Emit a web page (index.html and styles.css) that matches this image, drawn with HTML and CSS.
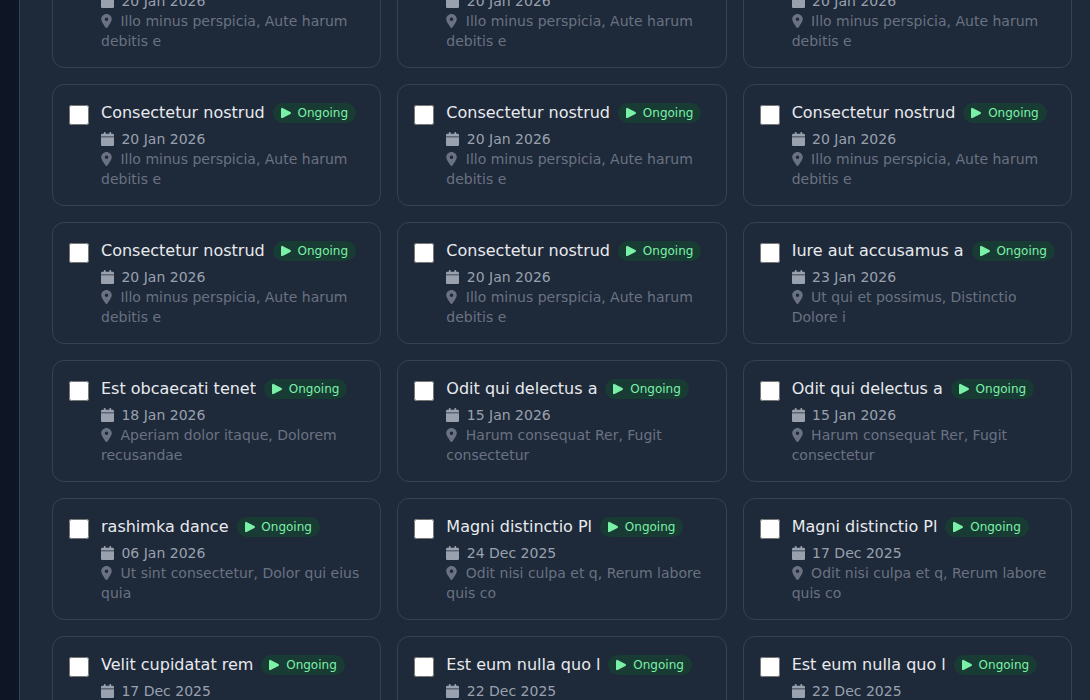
FILE: index.html
```html
<!DOCTYPE html>
<html lang="en">
<head>
<meta charset="utf-8">
<meta name="viewport" content="width=device-width, initial-scale=1">
<title>Events</title>
<link rel="stylesheet" href="styles.css">
</head>
<body>
<svg class="sprite" aria-hidden="true">
  <symbol id="play" viewBox="0 0 384 512" preserveAspectRatio="none"><path d="M60 39c-14.800-9.100-24-9.400-36-.9S0 62.600 0 80V432c0 17.400 4 33.400 18 41.900s28 8.100 42-.9L361 297c14.300-8.700 23-24.200 23-41s-8.700-32.200-23-41L60 39z"/></symbol>
  <symbol id="calendar" viewBox="0 0 448 512" preserveAspectRatio="none"><path d="M96 32V64H48C21.500 64 0 85.500 0 112v48H448V112c0-26.500-21.500-48-48-48H352V32c0-17.700-14.300-32-32-32s-32 14.300-32 32V64H160V32c0-17.700-14.300-32-32-32S96 14.300 96 32zM448 192H0V464c0 26.500 21.500 48 48 48H400c26.500 0 48-21.500 48-48V192z"/></symbol>
  <symbol id="pin" viewBox="0 0 384 512"><path d="M215.700 499.200C267 435 384 279.400 384 192C384 86 298 0 192 0S0 86 0 192c0 87.400 117 243 168.300 307.200c12.300 15.300 35.100 15.300 47.400 0zM192 128a64 64 0 1 1 0 128 64 64 0 1 1 0-128z"/></symbol>
</svg>
<main class="panel">
  <div class="events" id="events"></div>
</main>
<template id="event-card">
  <label class="card">
    <input class="check" type="checkbox">
    <span class="body">
      <span class="heading"><span class="title"></span><span class="badge"><svg class="icon play"><use href="#play"/></svg> Ongoing</span></span>
      <span class="date"><svg class="icon calendar"><use href="#calendar"/></svg> <span class="day"></span></span>
      <span class="place"><svg class="icon pin"><use href="#pin"/></svg> <span class="where"></span></span>
    </span>
  </label>
</template>
<script src="events.js"></script>
</body>
</html>
```
FILE: styles.css
```css
* {
  box-sizing: border-box;
}

html {
  overflow: hidden;
}

body {
  margin: 0;
  height: 100vh;
  overflow: hidden;
  padding-left: 19px;
  background: #0e1525;
  font-family: "DejaVu Sans", sans-serif;
  font-size: 14px;
  line-height: 20px;
}

.sprite {
  display: none;
}

.panel {
  display: flow-root;
  min-height: 100vh;
  padding: 0 18px 0 32px;
  border-left: 1px solid #364153;
  background: #1e2939;
}

/* The list is shown scrolled part-way through its first row. */
.events {
  display: grid;
  grid-template-columns: repeat(3, minmax(0, 1fr));
  gap: 16px;
  margin-top: -54px;
}

.card {
  display: flex;
  align-items: flex-start;
  gap: 12px;
  padding: 16px;
  border: 1px solid #364153;
  border-radius: 12px;
}

.check {
  flex: none;
  width: 20px;
  height: 20px;
  margin: 4px 0 0;
}

.body {
  flex: 1;
  min-width: 0;
}

.heading {
  display: flex;
  align-items: center;
  gap: 8px;
  margin-bottom: 4px;
}

.title {
  color: #e8eaee;
  font-size: 16px;
  line-height: 24px;
}

.badge {
  padding: 2px 8px;
  border-radius: 10px;
  background: #183c34;
  color: #7bf1a8;
  font-size: 12px;
  line-height: 16px;
  white-space: nowrap;
}

.date,
.place {
  display: block;
}

.date {
  color: #99a1af;
}

.place {
  color: #6a7282;
}

.icon {
  height: 14px;
  margin-right: 4px;
  fill: currentColor;
  vertical-align: -2px;
}

.calendar {
  width: 13px;
  margin-right: 3px;
}

.pin {
  width: 11px;
}

.play {
  width: 10px;
  height: 12px;
  margin-right: 3px;
}
```
FILE: events.js
```js
const nostrud = ["Consectetur nostrud", "20 Jan 2026", "Illo minus perspicia, Aute harum debitis e"];
const events = [
  nostrud, nostrud, nostrud,
  nostrud, nostrud, nostrud,
  nostrud, nostrud,
  ["Iure aut accusamus a", "23 Jan 2026", "Ut qui et possimus, Distinctio Dolore i"],
  ["Est obcaecati tenet", "18 Jan 2026", "Aperiam dolor itaque, Dolorem recusandae"],
  ["Odit qui delectus a", "15 Jan 2026", "Harum consequat Rer, Fugit consectetur"],
  ["Odit qui delectus a", "15 Jan 2026", "Harum consequat Rer, Fugit consectetur"],
  ["rashimka dance", "06 Jan 2026", "Ut sint consectetur, Dolor qui eius quia"],
  ["Magni distinctio Pl", "24 Dec 2025", "Odit nisi culpa et q, Rerum labore quis co"],
  ["Magni distinctio Pl", "17 Dec 2025", "Odit nisi culpa et q, Rerum labore quis co"],
  ["Velit cupidatat rem", "17 Dec 2025", ""],
  ["Est eum nulla quo l", "22 Dec 2025", ""],
  ["Est eum nulla quo l", "22 Dec 2025", ""]
];

const list = document.getElementById("events");
const template = document.getElementById("event-card");

for (const [title, day, where] of events) {
  const card = template.content.cloneNode(true);
  card.querySelector(".title").textContent = title;
  card.querySelector(".day").textContent = day;
  card.querySelector(".where").textContent = where;
  if (!where) card.querySelector(".place").remove();
  list.append(card);
}
```
